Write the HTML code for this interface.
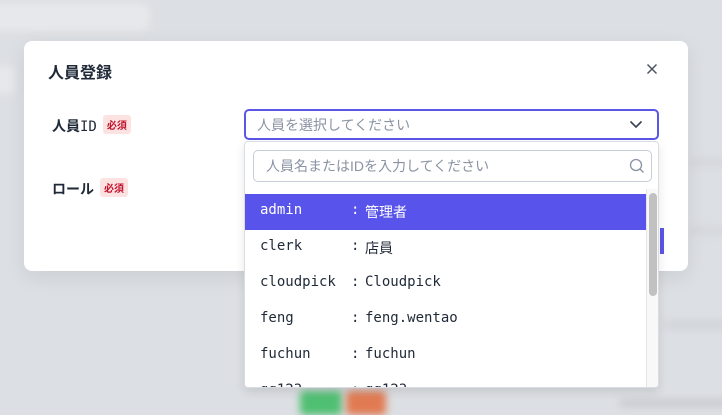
<!DOCTYPE html>
<html><head><meta charset="utf-8"><style>
*{box-sizing:border-box;margin:0;padding:0}
body{width:722px;height:412px;overflow:hidden;background:#dcdfe3;position:relative;font-family:"Liberation Sans","Noto Sans CJK JP",sans-serif}
.b{position:absolute;filter:blur(4px)}
.modal{position:absolute;left:24px;top:41px;width:664px;height:230px;background:#fff;border-radius:8px;box-shadow:0 6px 20px rgba(0,0,0,.08)}
.title{position:absolute;left:48px;top:59px;font-size:16px;font-weight:bold;color:#1f2937}
.lbl{position:absolute;left:52px;font-size:14px;font-weight:bold;color:#1f2937}
.req{display:inline-block;background:#fde2e2;color:#c0122b;font-size:10px;font-weight:bold;padding:2px 4px;border-radius:3px;margin-left:6px;vertical-align:2px}
.sel{position:absolute;left:244px;top:109px;width:415px;height:31px;border:2px solid #5b55e8;border-radius:5px;font-size:14px;color:#8a93a3;padding:4px 0 0 11px}
.dd{position:absolute;left:244px;top:141px;width:415px;height:247px;background:#fff;border:1px solid #d9dde3;border-radius:4px;box-shadow:0 4px 10px rgba(0,0,0,.1);overflow:hidden}
.search{position:absolute;left:8px;top:8px;width:399px;height:32px;border:1px solid #c8ced8;border-radius:5px;font-size:14px;color:#8a93a3;padding:5px 0 0 12px}
.row{position:absolute;left:0;width:401px;height:36px;font-family:"DejaVu Sans Mono","Noto Sans CJK JP",monospace;font-size:14px;color:#1f2937;padding-top:8px}
.row .k{position:absolute;left:15px}.row .c{position:absolute;left:106px}.row .v{position:absolute;left:120px}
.act{background:#5853ea;color:#fff}
.track{position:absolute;left:401px;top:47px;width:14px;height:200px;background:#f8f8f8;border-left:1px solid #e5e5e5}
.thumb{position:absolute;left:404px;top:51px;width:8px;height:103px;background:#c1c1c1;border-radius:4px}
</style></head><body>
<div class="b" style="left:-10px;top:3px;width:160px;height:28px;background:#e6e8eb;border-radius:8px"></div>
<div class="b" style="left:-10px;top:66px;width:25px;height:28px;background:#e6e8eb;border-radius:6px"></div>
<div class="b" style="left:690px;top:160px;width:40px;height:5px;background:#d0d3d8"></div>
<div class="b" style="left:690px;top:228px;width:40px;height:5px;background:#d0d3d8"></div>
<div class="b" style="left:665px;top:322px;width:70px;height:6px;background:#cdd0d5"></div>
<div class="b" style="left:620px;top:400px;width:110px;height:6px;background:#c3c6cc"></div>
<div class="b" style="left:300px;top:391px;width:42px;height:24px;background:#4fbf72;border-radius:4px"></div>
<div class="b" style="left:346px;top:391px;width:40px;height:24px;background:#e07a52;border-radius:4px"></div>
<div class="modal">
<div style="position:absolute;left:636px;top:187px;width:4px;height:26px;background:#5b55e8"></div>
</div>
<div class="title">人員登録</div>
<svg style="position:absolute;left:646px;top:63px" width="12" height="12" viewBox="0 0 12 12"><path d="M1.5 1.5L10.5 10.5M10.5 1.5L1.5 10.5" stroke="#4b5563" stroke-width="1.5"/></svg>
<div class="lbl" style="top:115px">人員<span style="font-family:'DejaVu Sans Mono',monospace;font-weight:normal">ID</span><span class="req">必須</span></div>
<div class="lbl" style="top:178px">ロール<span class="req">必須</span></div>
<div class="sel">人員を選択してください
<svg style="position:absolute;right:14px;top:9px" width="14" height="9" viewBox="0 0 14 9"><path d="M1.5 1.5L7 7L12.5 1.5" stroke="#374151" stroke-width="1.6" fill="none"/></svg></div>
<div class="dd">
<div class="search">人員名またはIDを入力してください
<svg style="position:absolute;right:6px;top:7px" width="16" height="16" viewBox="0 0 16 16"><circle cx="7" cy="7" r="5.5" stroke="#8a93a3" stroke-width="1.3" fill="none"/><path d="M11 11L14.5 14.5" stroke="#8a93a3" stroke-width="1.3"/></svg></div>
<div class="row act" style="top:52px"><span class="k">admin</span><span class="c">:</span><span class="v">管理者</span></div>
<div class="row" style="top:88px"><span class="k">clerk</span><span class="c">:</span><span class="v">店員</span></div>
<div class="row" style="top:124px"><span class="k">cloudpick</span><span class="c">:</span><span class="v">Cloudpick</span></div>
<div class="row" style="top:160px"><span class="k">feng</span><span class="c">:</span><span class="v">feng.wentao</span></div>
<div class="row" style="top:196px"><span class="k">fuchun</span><span class="c">:</span><span class="v">fuchun</span></div>
<div class="row" style="top:232px"><span class="k">gg123</span><span class="c">:</span><span class="v">gg123</span></div>
<div class="track"></div><div class="thumb"></div>
</div>
</body></html>
